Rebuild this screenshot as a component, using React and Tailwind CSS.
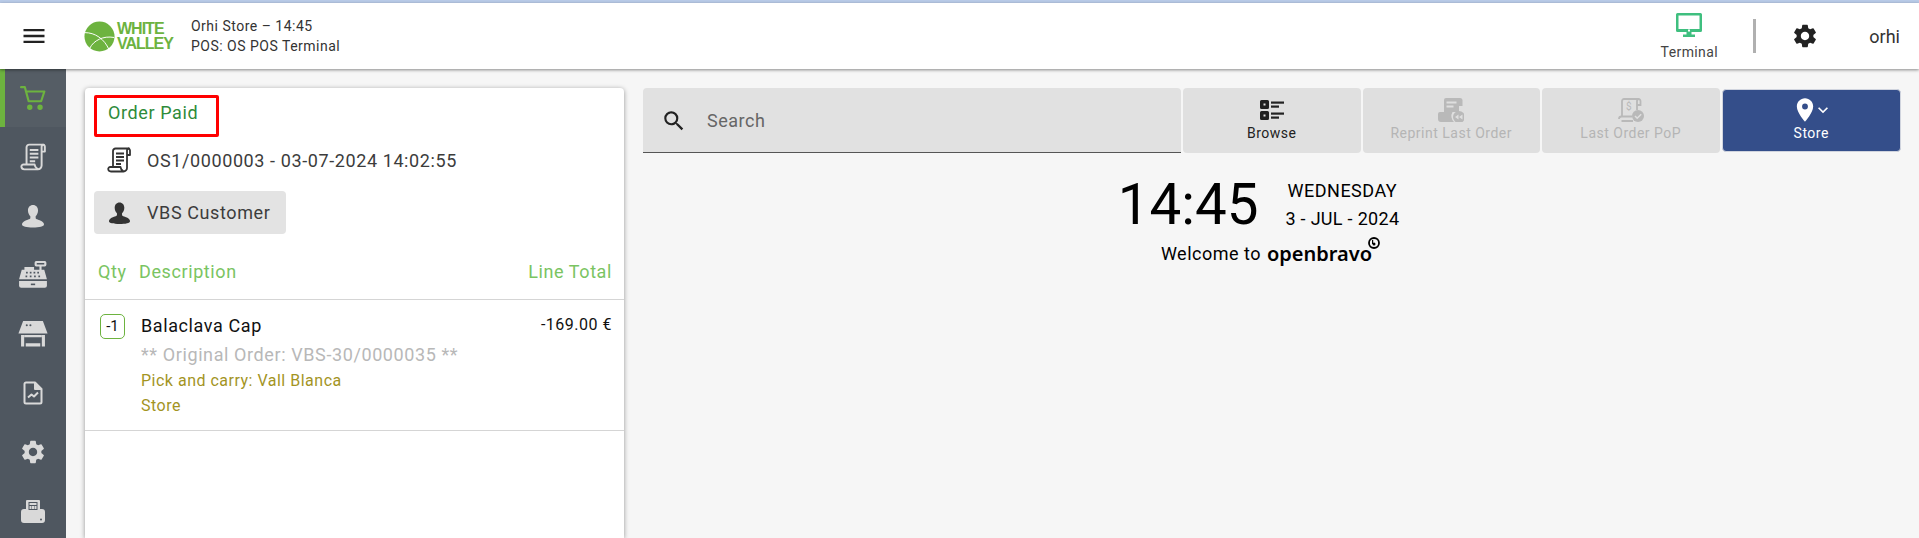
import { MdMenu, MdSettings, MdSearch, MdPlace, MdKeyboardArrowDown } from "react-icons/md";

function ScrollIcon({ className }) {
    return (
        <svg viewBox="0 0 24 26" className={className} fill="none" stroke="currentColor" strokeWidth="1.8" strokeLinejoin="round">
            <path d="M6 20V4a2.5 2.5 0 0 1 2.5-2.5H22a2 2 0 0 0-2 2V21a3.5 3.5 0 0 1-3.5 3.5H4A2.8 2.8 0 0 1 1.2 22a2 2 0 0 1 2-2H13.500c0 1.500 1 3 3 4.500" />
            <path d="M20 8h3V3.500a2 2 0 0 0-2-2" />
            <path d="M9 6.500h8M9 10h8M9 13.500h8M9 17h5" />
        </svg>
    );
}

function UserIcon({ className }) {
    return (
        <svg viewBox="0 0 24 26" className={className} fill="currentColor">
            <path d="M12 1c3.400 0 5.500 2.700 5.500 6 0 2.700-1.200 5-2.600 6.200v2.300c0 1 4.100 1.700 6.600 3.200 1.500.9 2.500 2.100 2.500 3.600 0 2.100-5 3.200-12 3.200S0 24.400 0 22.300c0-1.500 1-2.700 2.500-3.600 2.500-1.500 6.600-2.200 6.600-3.200v-2.300C7.700 12 6.500 9.700 6.500 7c0-3.300 2.100-6 5.500-6z" />
        </svg>
    );
}

function RegisterIcon({ className }) {
    return (
        <svg viewBox="0 0 28 28" className={className} fill="currentColor">
            <path fillRule="evenodd" d="M17 1h8a1.500 1.500 0 0 1 1.500 1.500v2A1.500 1.500 0 0 1 25 6h-3v3h2.500L27 18H1l2.500-9H6V6.500h9V9h5V6h-3a1.500 1.500 0 0 1-1.500-1.500v-2A1.500 1.500 0 0 1 17 1zm.5 1.800v1.400h7V2.800z" />
            <path d="M1 19.500h26V24a2 2 0 0 1-2 2H3a2 2 0 0 1-2-2z" />
            <g fill="#4f5760">
                <rect x="7.500" y="11" width="1.600" height="1.600" />
                <rect x="11" y="11" width="1.600" height="1.600" />
                <rect x="14.500" y="11" width="1.600" height="1.600" />
                <rect x="18" y="11" width="1.600" height="1.600" />
                <rect x="7" y="14.500" width="1.600" height="1.600" />
                <rect x="11" y="14.500" width="1.600" height="1.600" />
                <rect x="15" y="14.500" width="1.600" height="1.600" />
                <rect x="19" y="14.500" width="1.600" height="1.600" />
                <rect x="12" y="22" width="4" height="1.500" />
            </g>
        </svg>
    );
}

function StoreIcon({ className }) {
    return (
        <svg viewBox="0 0 28 26" className={className} fill="currentColor">
            <path d="M4.500 1h19L28 13H0z" />
            <path d="M2.500 14.500h3V25.500h-3zM22.500 14.500h3V25.500h-3z" />
            <path d="M5.500 14.500h17v2h-17zM7 22.500h14v3H7z" />
            <circle cx="8" cy="5" r="1" fill="#4f5760" />
            <circle cx="11.500" cy="5" r="1" fill="#4f5760" />
        </svg>
    );
}

function ReportIcon({ className }) {
    return (
        <svg viewBox="0 0 20 24" className={className} fill="none" stroke="currentColor" strokeWidth="2" strokeLinejoin="round">
            <path d="M3 1.500h9l6.500 6.500v13a1.500 1.500 0 0 1-1.500 1.500H3A1.500 1.500 0 0 1 1.500 21V3A1.500 1.500 0 0 1 3 1.500z" />
            <path d="M12 1.500V8h6.500" fill="currentColor" />
            <path d="M5 16.500l3.500-3 2.500 2 4-4" />
        </svg>
    );
}

function PosIcon({ className }) {
    return (
        <svg viewBox="0 0 24 24" className={className} fill="currentColor">
            <path fillRule="evenodd" d="M6 1h12a1 1 0 0 1 1 1v8h2a3 3 0 0 1 3 3v8a3 3 0 0 1-3 3H3a3 3 0 0 1-3-3v-8a3 3 0 0 1 3-3h2V2a1 1 0 0 1 1-1zm1.500 2v8h9V3z" />
            <path d="M8.500 4h7v2h-7zM8.500 7h2v3h-2zM11 7h2v3h-2zM13.500 7h2v3h-2z" />
            <circle cx="20" cy="20.500" r="1" fill="#4f5760" />
        </svg>
    );
}

function TerminalIcon() {
    return (
        <svg viewBox="0 0 28 26" className="w-[28px] h-[26px] text-[#3fbf7f]" fill="currentColor">
            <path fillRule="evenodd" d="M2.500 1h23A1.500 1.500 0 0 1 27 2.500v16a1.500 1.500 0 0 1-1.500 1.500h-23A1.500 1.500 0 0 1 1 18.500v-16A1.500 1.500 0 0 1 2.500 1zM3.500 3.500v13.500h21V3.500z" />
            <path d="M11.500 20h5v2.500h3.500V25H8v-2.500h3.500z" />
            <rect x="13" y="17.500" width="2" height="2" fill="#fff" />
        </svg>
    );
}

function BrowseIcon() {
    return (
        <svg viewBox="0 0 24 20" className="w-[24px] h-[20px] text-[#222]" fill="currentColor">
            <path fillRule="evenodd" d="M1.500 0h6A1.500 1.500 0 0 1 9 1.500v6A1.500 1.500 0 0 1 7.500 9h-6A1.500 1.500 0 0 1 0 7.500v-6A1.500 1.500 0 0 1 1.500 0zM3.500 3.500v2h2v-2z" />
            <path fillRule="evenodd" d="M1.500 11h6A1.500 1.500 0 0 1 9 12.500v6A1.500 1.500 0 0 1 7.500 20h-6A1.500 1.500 0 0 1 0 18.500v-6A1.500 1.500 0 0 1 1.500 11zM3.500 14.500v2h2v-2z" />
            <rect x="11" y="1.500" width="13" height="2.200" />
            <rect x="11" y="5.500" width="8" height="2.200" />
            <rect x="11" y="12.500" width="13" height="2.200" />
            <rect x="11" y="16.500" width="8" height="2.200" />
        </svg>
    );
}

function ReprintIcon() {
    return (
        <svg viewBox="0 0 26 24" className="w-[26px] h-[24px] text-[#b9b9b9]" fill="currentColor">
            <path fillRule="evenodd" d="M6 2a2 2 0 0 1 2-2h14a2.500 2.500 0 0 1 2.500 2.500V8H21v6H6zM8.500 3.500v2h10v-2zm0 4v2h7v-2z" />
            <path d="M0 16a2 2 0 0 1 2-2h12.500a8 8 0 0 0 1.500 10H3a3 3 0 0 1-3-3z" />
            <circle cx="21" cy="19" r="6" />
            <path d="M20.500 16.500v5L17 19zM24.500 16.500v5L21 19z" fill="#dfdfdf" />
        </svg>
    );
}

function PopIcon() {
    return (
        <svg viewBox="0 0 26 24" className="w-[26px] h-[24px] text-[#b9b9b9]" fill="none" stroke="currentColor" strokeWidth="1.800">
            <path d="M4 18V3a2 2 0 0 1 2-2h15a2 2 0 0 0-2 2v9" />
            <path d="M19 7h3.500V3a2 2 0 0 0-2-2" />
            <path d="M1 21a2.500 2.500 0 0 1 2.500-2.500H14M3.500 23H15" />
            <circle cx="20" cy="18" r="6" fill="currentColor" stroke="none" />
            <path d="M17 18l2.200 2.200 4-4" stroke="#dfdfdf" strokeWidth="1.600" />
            <text x="8" y="12" fontSize="10" fill="currentColor" stroke="none" fontFamily="Roboto, sans-serif">$</text>
        </svg>
    );
}

const sideIcons = [
    <ScrollIcon className="w-[26px] h-[28px]" />,
    <UserIcon className="w-[22px] h-[24px]" />,
    <RegisterIcon className="w-[30px] h-[30px]" />,
    <StoreIcon className="w-[30px] h-[27px]" />,
    <ReportIcon className="w-[20px] h-[24px]" />,
    <MdSettings className="w-[28px] h-[28px]" />,
    <PosIcon className="w-[24px] h-[24px]" />,
];

function ActionButton({ icon, label, disabled, primary }) {
    const tone = primary
        ? "bg-[#344e8a] text-white my-px border border-[#d0d4de]"
        : disabled
          ? "bg-[#dfdfdf] text-[#b5b5b5]"
          : "bg-[#e0e0e0] text-[#222]";
    return (
        <div className={`flex-1 rounded flex flex-col items-center justify-center pb-[2px] ${tone}`}>
            <div className="h-[26px] flex items-center justify-center">{icon}</div>
            <div className="text-[14px] leading-[20px] tracking-[0.5px]">{label}</div>
        </div>
    );
}

export default function App() {
    return (
        <div className="h-[538px] w-full overflow-hidden bg-[#f6f6f6] flex flex-col font-['Roboto',sans-serif]">
            <div className="h-[3px] bg-[#b9cbe8] shrink-0"></div>

            {/* Header */}
            <header className="h-[66px] shrink-0 bg-white flex items-center shadow-[0_1px_3px_rgba(0,0,0,0.45)] relative z-10 pl-[20px] pr-[19px]">
                <MdMenu className="w-[28px] h-[28px] text-[#222]" />
                <div className="flex items-center ml-[36px]">
                    <svg viewBox="0 0 32 32" className="w-[31px] h-[31px]">
                        <circle cx="16" cy="16" r="15.500" fill="#6db33f" />
                        <path d="M1 12c10 0 20 6 25 18M6 28c4-8 14-13 25-11" fill="none" stroke="#fff" strokeWidth="1" />
                    </svg>
                    <div className="ml-[2px] text-[#6db33f] font-bold text-[16px] leading-[15px] tracking-[-1px] font-['Liberation_Sans',sans-serif]">
                        <div>WHITE</div>
                        <div>VALLEY</div>
                    </div>
                </div>
                <div className="ml-[18px] text-[14px] leading-[20px] tracking-[0.5px] text-[#333]">
                    <div>Orhi Store – 14:45</div>
                    <div>POS: OS POS Terminal</div>
                </div>
                <div className="ml-auto flex items-center">
                    <div className="flex flex-col items-center w-[60px] mt-[1px]">
                        <TerminalIcon />
                        <div className="text-[14px] leading-[18px] tracking-[0.4px] text-[#444] mt-[5px]">Terminal</div>
                    </div>
                    <div className="w-[3px] h-[34px] bg-[#b0b0b0] ml-[34px]"></div>
                    <MdSettings className="w-[28px] h-[28px] text-[#222] ml-[35px]" />
                    <div className="text-[18px] text-[#333] ml-[50px]">orhi</div>
                </div>
            </header>

            {/* Body */}
            <div className="flex flex-1 min-h-0">
                <nav className="w-[66px] shrink-0 bg-[#4f5760] flex flex-col">
                    <div className="h-[58px] shrink-0 bg-[#555d65] border-l-[5px] border-[#6db33f] flex items-center justify-center pr-[5px]">
                        <svg viewBox="0 0 24 24" className="w-[26px] h-[26px] text-[#6db33f]" fill="none" stroke="currentColor" strokeWidth="2" strokeLinecap="round" strokeLinejoin="round">
                            <path d="M1 2h3.500l3.500 13h11.500l3-9H5.500" />
                            <circle cx="9" cy="20.500" r="1.500" fill="currentColor" />
                            <circle cx="18.500" cy="20.500" r="1.500" fill="currentColor" />
                        </svg>
                    </div>
                    {sideIcons.map((icon, i) => (
                        <div key={i} className="h-[59px] shrink-0 flex items-center justify-center text-[#d9d9d9]">
                            {icon}
                        </div>
                    ))}
                </nav>

                <main className="flex-1 min-w-0 flex pt-[19px] pl-[19px] pr-[18px]">
                    {/* Order panel */}
                    <section className="relative w-[539px] shrink-0 bg-white rounded-t shadow-[0_1px_5px_rgba(0,0,0,0.4)] tracking-[0.6px]">
                        <div className="absolute left-[9px] top-[7px] w-[125px] h-[42px] border-[3px] border-[#ff0000] rounded-[2px]"></div>
                        <div className="pt-[14px] pl-[23px] text-[18px] leading-[22px] text-[#2e8b3a]">Order Paid</div>
                        <div className="mt-[24px] pl-[22px] flex items-center h-[24px]">
                            <ScrollIcon className="w-[24px] h-[26px] text-[#333]" />
                            <span className="ml-[16px] text-[18px] text-[#3c3c3c]">OS1/0000003 - 03-07-2024 14:02:55</span>
                        </div>
                        <div className="mt-[19px] ml-[9px] w-[192px] h-[43px] bg-[#e3e3e3] rounded flex items-center pl-[15px]">
                            <UserIcon className="w-[21px] h-[24px] text-[#333]" />
                            <span className="ml-[17px] text-[18px] text-[#3c3c3c]">VBS Customer</span>
                        </div>
                        <div className="h-[66px] pt-[28px] pl-[13px] pr-[12px] border-b border-[#d5d5d5] flex items-start text-[18px] leading-[20px] text-[#7ac462]">
                            <span className="w-[41px]">Qty</span>
                            <span>Description</span>
                            <span className="ml-auto">Line Total</span>
                        </div>
                        <div className="h-[131px] border-b border-[#d5d5d5] pt-[14px] pl-[15px] pr-[12px] flex items-start">
                            <div className="w-[25px] h-[25px] border border-[#6db33f] rounded-[5px] flex items-center justify-center text-[15px] tracking-normal text-[#111]">-1</div>
                            <div className="ml-[16px] flex-1 min-w-0">
                                <div className="text-[18px] leading-[24px] text-[#111]">Balaclava Cap</div>
                                <div className="mt-[5px] text-[18px] leading-[24px] text-[#b8b8b8]">** Original Order: VBS-30/0000035 **</div>
                                <div className="mt-[3px] text-[16px] leading-[22px] tracking-[0.5px] text-[#a3941f]">Pick and carry: Vall Blanca</div>
                                <div className="mt-[3px] text-[16px] leading-[22px] tracking-[0.5px] text-[#a3941f]">Store</div>
                            </div>
                            <div className="text-[16px] leading-[22px] tracking-[0.5px] text-[#111]">-169.00 €</div>
                        </div>
                    </section>

                    {/* Right side */}
                    <section className="flex-1 min-w-0 ml-[19px]">
                        <div className="flex h-[65px] gap-[2px]">
                            <div className="w-[538px] shrink-0 bg-[#e1e1e1] rounded-t border-b border-[#555] flex items-center pl-[18px]">
                                <MdSearch className="w-[26px] h-[26px] text-[#222] mt-[1px]" />
                                <span className="ml-[20px] text-[18px] tracking-[0.5px] text-[#666] mt-[1px]">Search</span>
                            </div>
                            <ActionButton icon={<BrowseIcon />} label="Browse" />
                            <ActionButton icon={<ReprintIcon />} label="Reprint Last Order" disabled />
                            <ActionButton icon={<PopIcon />} label="Last Order PoP" disabled />
                            <ActionButton
                                primary
                                label="Store"
                                icon={
                                    <span className="flex items-center ml-[2px]">
                                        <MdPlace className="w-[28px] h-[28px]" />
                                        <MdKeyboardArrowDown className="w-[20px] h-[20px] -ml-[6px]" />
                                    </span>
                                }
                            />
                        </div>

                        <div className="w-[1233px] flex flex-col items-center mt-[20px] text-black tracking-[0.5px]">
                            <div className="flex items-center mr-[2px]">
                                <span className="text-[56.5px] leading-[64px] tracking-normal">14:45</span>
                                <div className="ml-[27px] text-center text-[18px] leading-[28px] tracking-[0.3px]">
                                    <div className="tracking-[0.5px]">WEDNESDAY</div>
                                    <div>3 - JUL - 2024</div>
                                </div>
                            </div>
                            <div className="flex items-center mt-[3px] ml-[14px]">
                                <span className="text-[18px]">Welcome to</span>
                                <span className="relative ml-[6px] text-[20px] leading-[24px] font-semibold tracking-normal font-['Noto_Sans',sans-serif]">
                                    openbravo
                                    <svg viewBox="0 0 12 12" className="absolute -right-[8px] -top-[5px] w-[12px] h-[12px]" fill="none" stroke="#000" strokeWidth="1.800">
                                        <circle cx="6" cy="6" r="5" />
                                        <circle cx="6" cy="7" r="1.500" fill="#000" stroke="none" />
                                        <path d="M4.600 3v4" strokeWidth="1.200" />
                                    </svg>
                                </span>
                            </div>
                        </div>
                    </section>
                </main>
            </div>
        </div>
    );
}
